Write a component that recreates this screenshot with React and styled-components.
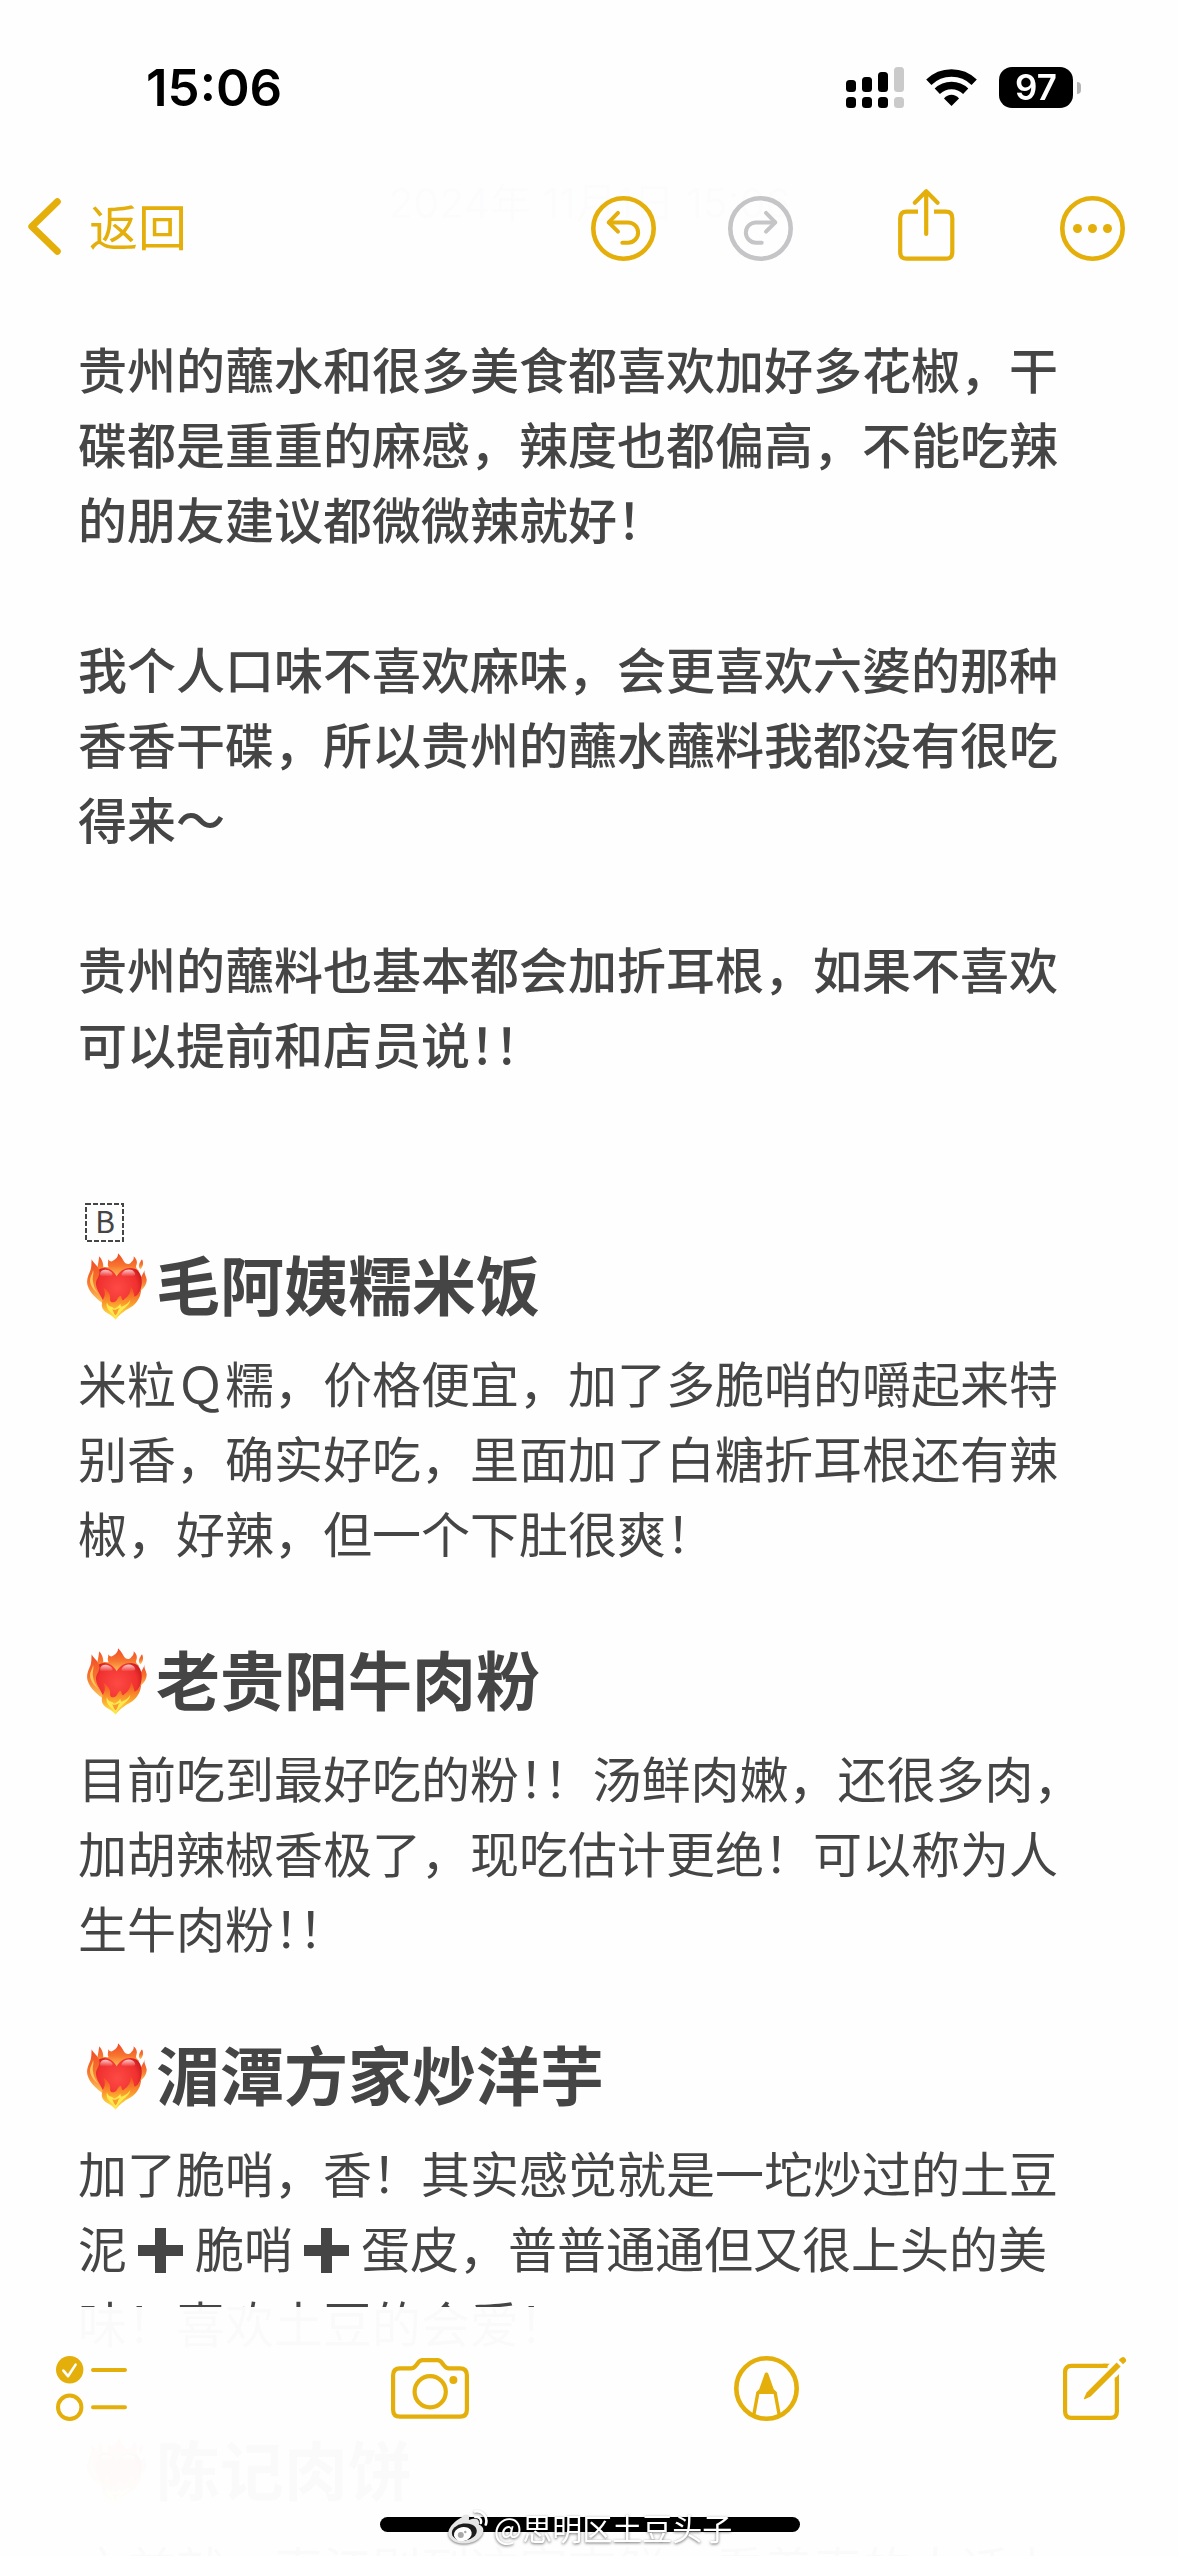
import React, { useId } from "react";
import styled, { createGlobalStyle } from "styled-components";

const GlobalStyle = createGlobalStyle`
  * {
    box-sizing: border-box;
  }
  body {
    margin: 0;
    background: #fefefe;
  }
`;

const accent = "#e4af0a";
const disabled = "#c5c5c7";
const cjk = `"Noto Sans CJK SC", "Noto Sans", sans-serif`;

const Screen = styled.div`
  height: 100vh;
  overflow: hidden;
  background: #fefefe;
  color: #454545;
  font-family: ${cjk};
  font-size: 49px;
  line-height: 75px;
`;

/* Both bars float over the scrolled note and let a trace of it through */
const Header = styled.header`
  position: fixed;
  top: 0;
  left: 0;
  right: 0;
  padding: 67px 0 15px;
  background: rgba(254, 254, 254, 0.98);
`;

const Footer = styled.footer`
  position: fixed;
  bottom: 0;
  left: 0;
  right: 0;
  display: flex;
  flex-direction: column;
  gap: 95px;
  padding: 48px 0 24px;
  background: rgba(254, 254, 254, 0.98);
`;

const StatusBar = styled.div`
  display: flex;
  align-items: center;
  justify-content: space-between;
  height: 41px;
  padding: 0 98px 0 146px;
  color: #000;
  font-family: Inter, sans-serif;
`;

const Time = styled.span`
  font-size: 51px;
  font-weight: 600;
`;

const StatusIcons = styled.div`
  display: flex;
  align-items: center;
  gap: 22px;
`;

const Battery = styled.div`
  display: flex;
  align-items: center;
  gap: 4px;
  &:after {
    content: "";
    width: 4px;
    height: 12px;
    border-radius: 0 4px 4px 0;
    background: #b4b4b4;
  }
`;

const BatteryLevel = styled.span`
  width: 74px;
  height: 41px;
  border-radius: 13px;
  background: #000;
  color: #fff;
  font-size: 35px;
  font-weight: 600;
  line-height: 41px;
  text-align: center;
`;

const Nav = styled.nav`
  display: flex;
  align-items: center;
  justify-content: space-between;
  height: 72px;
  margin-top: 81px;
  padding: 0 54px 0 28px;
`;

const IconButton = styled.button`
  display: flex;
  padding: 0;
  border: 0;
  background: none;
  color: ${accent};
  font: inherit;
  cursor: pointer;
  svg {
    display: block;
    overflow: visible;
  }
  &:disabled {
    color: ${disabled};
    cursor: default;
  }
`;

const BackButton = styled(IconButton)`
  align-items: center;
  gap: 28px;
  font-size: 49px;
  line-height: 72px;
`;

const Actions = styled.div`
  display: flex;
  align-items: flex-end;
  gap: ${(props) => props.$gap}px;
`;

const Toolbar = styled.div`
  display: flex;
  align-items: center;
  justify-content: space-between;
  height: 67px;
  padding: 0 53px 0 56px;
`;

const HomeArea = styled.div`
  position: relative;
  display: flex;
  justify-content: center;
`;

const HomeIndicator = styled.div`
  width: 420px;
  height: 15px;
  border-radius: 8px;
  background: #000;
`;

const Watermark = styled.div`
  position: absolute;
  top: 50%;
  left: 50%;
  display: flex;
  align-items: center;
  gap: 5px;
  padding-top: 4px;
  transform: translate(-50%, -50%);
  color: #fff;
  font-size: 30px;
  line-height: 36px;
  white-space: nowrap;
  text-shadow: 0 1px 3px rgba(0, 0, 0, 0.6);
  svg {
    filter: drop-shadow(0 1px 1px rgba(0, 0, 0, 0.5));
  }
`;

const Note = styled.main`
  padding: 166px 78px 0;
`;

const NoteDate = styled.time`
  display: block;
  margin-bottom: 89px;
  color: #a0a0a4;
  font-family: Inter, ${cjk};
  font-size: 41px;
  text-align: center;
`;

const Paragraph = styled.p`
  margin: 0;
`;

const Intro = styled.section`
  display: flex;
  flex-direction: column;
  gap: 75px;
  margin-bottom: 123px;
  font-weight: 500;
`;

const BlockBadge = styled.svg`
  display: block;
  overflow: visible;
  margin: 0 0 3px 7px;
`;

const Shop = styled.section`
  margin-bottom: 71px;
`;

const ShopTitle = styled.h2`
  display: flex;
  align-items: flex-end;
  gap: 9px;
  margin: 0 0 24px;
  padding-left: 8px;
  font-size: 64px;
  font-weight: 600;
  line-height: 75px;
`;

/* The first of two marks in a row takes half an em */
const HalfMark = styled.span`
  font-feature-settings: "halt";
`;

const PlusMark = styled.svg`
  width: 68px;
  height: 45px;
  vertical-align: -5px;
`;

function DoubleBang() {
  return (
    <>
      <HalfMark>！</HalfMark>！
    </>
  );
}

function Plus() {
  return (
    <PlusMark viewBox="0 0 68 45" role="img" aria-label="加">
      <path d="M28 0h11v17h17v11H39v17H28V28H11V17h17z" fill="currentColor" />
    </PlusMark>
  );
}

function FireHeart() {
  const id = useId();
  const flame = `${id}flame`;
  const heart = `${id}heart`;
  const low = `${id}low`;
  const gloss = `${id}gloss`;
  return (
    <svg width="61" height="67" viewBox="78 187 183 201" role="img" aria-label="燃烧的心">
      <defs>
        <linearGradient id={flame} x1="0" y1="0" x2="0" y2="1">
          <stop offset="0" stopColor="#f24a26" />
          <stop offset="0.5" stopColor="#f7742f" />
          <stop offset="1" stopColor="#fdc95a" />
        </linearGradient>
        <linearGradient id={low} x1="0" y1="0" x2="0" y2="1">
          <stop offset="0" stopColor="#f24a26" />
          <stop offset="0.5" stopColor="#fa9a2c" />
          <stop offset="1" stopColor="#fff04a" />
        </linearGradient>
        <radialGradient id={heart} cx="0.5" cy="0.4" r="0.62">
          <stop offset="0" stopColor="#fd4a45" />
          <stop offset="0.65" stopColor="#f0312f" />
          <stop offset="1" stopColor="#b80e17" />
        </radialGradient>
        <linearGradient id={gloss} x1="0" y1="0" x2="0" y2="1">
          <stop offset="0" stopColor="#fff" stopOpacity="0.75" />
          <stop offset="1" stopColor="#fff" stopOpacity="0" />
        </linearGradient>
      </defs>
      <path
        fill={`url(#${flame})`}
        d="M112 232C114 220 116 210 118 197C126 207 130 216 130 230C138 228 141 230 146 230C140 220 147 214 144 206C151 214 156 214 161 209C169 204 175 198 174 188C184 197 187 205 191 211C196 221 208 224 214 214C220 209 222 204 221 197C230 205 233 214 229 224C226 232 232 236 237 240L226 262H116z"
      />
      <path fill={`url(#${flame})`} d="M246 206C251 216 250 228 241 236C233 229 237 218 246 206z" />
      <path
        fill={`url(#${flame})`}
        d="M253 236C253 246 246 252 243 260L236 306C247 297 261 283 260 266C258 255 252 249 253 236z"
      />
      <path
        fill={`url(#${heart})`}
        d="M170 257C160 238 140 227 121 234C99 243 92 273 106 304C121 335 150 362 167 384C188 362 226 334 240 302C251 273 245 242 224 234C202 227 180 238 170 257z"
      />
      <path
        fill={`url(#${gloss})`}
        d="M120 250C122 234 146 233 157 248C161 256 148 258 140 257C128 257 119 261 120 250zM185 249C194 233 219 233 225 248C228 258 216 256 207 256C196 257 182 259 185 249z"
      />
      <path
        fill={`url(#${flame})`}
        d="M95 206C100 219 114 224 118 240C121 256 109 263 108 278C107 292 117 306 124 320C129 329 132 337 134 341C112 327 91 309 83 285C76 263 92 244 93 232C95 222 94 214 95 206z"
      />
      <path
        fill="#ffc95c"
        d="M99 238C103 248 96 259 99 272C100 285 106 296 114 309C97 295 87 278 91 262C93 253 99 247 99 238z"
      />
      <path
        fill={`url(#${low})`}
        d="M130 291C144 299 153 313 150 327C151 335 160 338 169 330C176 318 181 310 184 319C186 331 190 331 193 325C206 316 213 304 212 288C221 298 221 310 224 318C234 313 241 303 243 294C244 316 232 335 217 347C202 356 180 368 167 387C153 367 121 366 126 337C127 325 142 314 130 291z"
      />
      <path
        fill="#ffe94f"
        d="M141 334C143 350 156 345 162 354C170 351 176 346 181 339C182 347 184 350 188 347C199 342 207 336 211 327C210 347 183 355 167 381C155 364 134 356 141 334z"
      />
      <path fill="#f99b2d" d="M156 355C161 361 160 369 167 374C175 366 172 358 180 352C170 355 163 361 156 355z" />
    </svg>
  );
}

function Badge() {
  return (
    <BlockBadge width="39" height="39" viewBox="0 0 39 39">
      <rect x="1" y="1" width="37" height="37" fill="none" stroke="#454545" strokeWidth="2" strokeDasharray="5 2" />
      <text x="20" y="30" fill="#454545" fontSize="30" fontFamily="Noto Sans CJK SC, sans-serif" textAnchor="middle">
        B
      </text>
    </BlockBadge>
  );
}

function Signal() {
  const bars = [13, 10, 5, 0];
  return (
    <svg width="58" height="41" viewBox="0 0 58 41" role="img" aria-label="信号">
      {bars.map((top, i) => (
        <g key={top} fill={i === 3 ? "#cacaca" : "#000"}>
          <rect x={i * 16} y={top} width="10" height={25 - top} rx="3.5" />
          <rect x={i * 16} y="30" width="10" height="11" rx="3.5" />
        </g>
      ))}
    </svg>
  );
}

function Wifi() {
  return (
    <svg width="51" height="37" viewBox="0 0 51 37" role="img" aria-label="无线网络">
      <g fill="none" stroke="#000" strokeWidth="7.5">
        <path d="M2.8 13.2A32.5 32.5 0 0 1 48.2 13.2" />
        <path d="M11.3 22.3A20.5 20.5 0 0 1 39.7 22.3" />
      </g>
      <path d="M25.5 37L18 29.5C22 24.5 29 24.5 33 29.5z" />
    </svg>
  );
}

function ChevronIcon() {
  return (
    <svg width="33" height="57" viewBox="0 0 33 57" fill="none" stroke="currentColor" strokeWidth="7" strokeLinecap="round" strokeLinejoin="round">
      <path d="M29.3 4.8L3.8 29.5L29.3 54.2" />
    </svg>
  );
}

function TurnIcon({ mirrored }) {
  return (
    <svg width="65" height="65" viewBox="0 0 65 65" fill="none" stroke="currentColor" strokeLinecap="round" strokeLinejoin="round">
      <circle cx="32.5" cy="32.5" r="30.2" strokeWidth="4.6" />
      <g strokeWidth="4" transform={mirrored ? "translate(65 0) scale(-1 1)" : undefined}>
        <path d="M27 16.9L17.7 26.4L27 35.7" />
        <path d="M18 26.4H37A10.1 10.1 0 0 1 37 46.7H31.3" />
      </g>
    </svg>
  );
}

function ShareIcon() {
  return (
    <svg width="65" height="72" viewBox="0 0 65 72" fill="none" stroke="currentColor" strokeWidth="4.2">
      <path d="M24 22.6H12.5Q6.2 22.6 6.2 29V63.3Q6.2 69.7 12.5 69.7H52Q58.3 69.7 58.3 63.3V29Q58.3 22.6 52 22.6H40" />
      <path d="M32.2 45V2.5M20.8 13.7L32.2 2.3L43.6 13.7" strokeLinecap="round" strokeLinejoin="round" />
    </svg>
  );
}

function MoreIcon() {
  return (
    <svg width="65" height="65" viewBox="0 0 65 65" fill="currentColor">
      <circle cx="32.5" cy="32.5" r="30.2" fill="none" stroke="currentColor" strokeWidth="4.6" />
      <circle cx="17.5" cy="32.5" r="4.5" />
      <circle cx="32.5" cy="32.5" r="4.5" />
      <circle cx="47.5" cy="32.5" r="4.5" />
    </svg>
  );
}

function ChecklistIcon() {
  return (
    <svg width="71" height="65" viewBox="0 0 71 65" fill="none" stroke="currentColor" strokeWidth="4" strokeLinecap="round">
      <circle cx="13.7" cy="13.7" r="13.7" fill="currentColor" stroke="none" />
      <path d="M7.4 14.6L12 20.2L19.6 8.6" stroke="#fefefe" strokeWidth="2.6" strokeLinejoin="round" />
      <circle cx="13.7" cy="51.3" r="11.7" />
      <path d="M37 14H69M37 51.3H69" />
    </svg>
  );
}

function CameraIcon() {
  return (
    <svg width="78" height="61" viewBox="0 0 78 61" fill="none" stroke="currentColor" strokeWidth="4.2">
      <path d="M9 10.4H20C22.5 10.4 23.6 9.4 25 7.4L27 4.9C28.3 3 29.6 2.1 31.6 2.1H46.4C48.4 2.1 49.7 3 51 4.9L53 7.4C54.4 9.4 55.5 10.4 58 10.4H69C73.5 10.4 75.9 12.7 75.9 17.2V51.8C75.9 56.3 73.5 58.7 69 58.7H9C4.5 58.7 2.1 56.3 2.1 51.8V17.2C2.1 12.7 4.5 10.4 9 10.4z" />
      <circle cx="39.2" cy="33.7" r="15.6" />
      <circle cx="62.4" cy="22" r="4" fill="currentColor" stroke="none" />
    </svg>
  );
}

function MarkupIcon() {
  return (
    <svg width="65" height="65" viewBox="0 0 65 65" fill="none" stroke="currentColor">
      <circle cx="32.5" cy="32.5" r="30.2" strokeWidth="4.6" />
      <path d="M30.7 17.8C31.3 16 33.7 16 34.3 17.8L39.8 33.2L42.2 35.6V38H22.8V35.6L25.2 33.2z" fill="currentColor" stroke="none" />
      <path d="M24 36L19.8 59M41 36L45.2 59" strokeWidth="3.4" />
    </svg>
  );
}

function ComposeIcon() {
  return (
    <svg width="63" height="63" viewBox="0 0 63 63" fill="none" stroke="currentColor" strokeWidth="4.2">
      <path d="M44.5 8.8H8.5Q2.1 8.8 2.1 15.2V54.4Q2.1 60.8 8.5 60.8H47.5Q53.9 60.8 53.9 54.4V20.5" />
      <path d="M46.8 6.7L42.6 10.9H40V6.7zM56 17L51.8 21.4V24H56z" fill="currentColor" stroke="none" />
      <path d="M53.6 5.4L57.6 9.4L27.6 39.6L21.8 42.2Q20.6 42.4 21 41.2L23.6 35.6z" fill="currentColor" stroke="none" />
      <path d="M57.2 1.6Q59.9-1.2 62.2 1.2T61.6 5.8L60 7.2L55.8 3z" fill="currentColor" stroke="none" />
    </svg>
  );
}

function WeiboLogo() {
  return (
    <svg width="42" height="36" viewBox="0 0 42 36">
      <path
        fill="#e6e6e6"
        d="M15 8C19 4.5 23 6 21.5 11C27 9 33 9 31.5 15.5C36 17 37.5 21 34.5 26C30 33 20 36 11 34C3 32 -1 26 2 20C4.5 15 10 10.5 15 8z"
      />
      <ellipse cx="17" cy="23" rx="12.5" ry="8.5" fill="#1c1c1c" transform="rotate(-8 17 23)" />
      <ellipse cx="15.500" cy="25" rx="9" ry="7" fill="#fff" transform="rotate(-12 15.5 25)" />
      <circle cx="13.5" cy="26" r="3" fill="#a8a8a8" />
      <circle cx="18" cy="23" r="1.2" fill="#a8a8a8" />
      <path d="M27.5 2.5C35 1 41 8 38.5 15.5M28 8C32 7.5 34.5 10.5 33.5 14" fill="none" stroke="#fff" strokeWidth="2.6" strokeLinecap="round" />
    </svg>
  );
}

const shops = [
  {
    name: "毛阿姨糯米饭",
    text: "米粒Ｑ糯，价格便宜，加了多脆哨的嚼起来特别香，确实好吃，里面加了白糖折耳根还有辣椒，好辣，但一个下肚很爽！",
  },
  {
    name: "老贵阳牛肉粉",
    text: (
      <>
        目前吃到最好吃的粉
        <DoubleBang />
        汤鲜肉嫩，还很多肉，加胡辣椒香极了，现吃估计更绝！可以称为人生牛肉粉
        <DoubleBang />
      </>
    ),
  },
  {
    name: "湄潭方家炒洋芋",
    text: (
      <>
        加了脆哨，香！其实感觉就是一坨炒过的土豆泥
        <Plus />
        脆哨
        <Plus />
        蛋皮，普普通通但又很上头的美味！喜欢土豆的会爱！
      </>
    ),
  },
  {
    name: "陈记肉饼",
    text: "之前就，直江别到这家吉鲜，看着真的人话上",
  },
];

function App() {
  return (
    <Screen>
      <GlobalStyle />
      <Note>
        <NoteDate dateTime="2024-11-01T15:06">2024年 11月1日 15:06</NoteDate>
        <Intro>
          <Paragraph>
            贵州的蘸水和很多美食都喜欢加好多花椒，干碟都是重重的麻感，辣度也都偏高，不能吃辣的朋友建议都微微辣就好！
          </Paragraph>
          <Paragraph>
            我个人口味不喜欢麻味，会更喜欢六婆的那种香香干碟，所以贵州的蘸水蘸料我都没有很吃得来～
          </Paragraph>
          <Paragraph>
            贵州的蘸料也基本都会加折耳根，如果不喜欢可以提前和店员说
            <DoubleBang />
          </Paragraph>
        </Intro>
        <Badge />
        {shops.map((shop) => (
          <Shop key={shop.name}>
            <ShopTitle>
              <FireHeart />
              {shop.name}
            </ShopTitle>
            <Paragraph>{shop.text}</Paragraph>
          </Shop>
        ))}
      </Note>
      <Header>
        <StatusBar>
          <Time>15:06</Time>
          <StatusIcons>
            <Signal />
            <Wifi />
            <Battery>
              <BatteryLevel>97</BatteryLevel>
            </Battery>
          </StatusIcons>
        </StatusBar>
        <Nav>
          <BackButton type="button">
            <ChevronIcon />
            返回
          </BackButton>
          <Actions $gap={101}>
            <Actions $gap={72}>
              <IconButton type="button" aria-label="撤销">
                <TurnIcon />
              </IconButton>
              <IconButton type="button" aria-label="重做" disabled>
                <TurnIcon mirrored />
              </IconButton>
            </Actions>
            <IconButton type="button" aria-label="共享">
              <ShareIcon />
            </IconButton>
            <IconButton type="button" aria-label="更多">
              <MoreIcon />
            </IconButton>
          </Actions>
        </Nav>
      </Header>
      <Footer>
        <Toolbar>
          <IconButton type="button" aria-label="核对清单">
            <ChecklistIcon />
          </IconButton>
          <IconButton type="button" aria-label="相机">
            <CameraIcon />
          </IconButton>
          <IconButton type="button" aria-label="标记">
            <MarkupIcon />
          </IconButton>
          <IconButton type="button" aria-label="新建备忘录">
            <ComposeIcon />
          </IconButton>
        </Toolbar>
        <HomeArea>
          <HomeIndicator />
          <Watermark>
            <WeiboLogo />
            @思明区土豆头子
          </Watermark>
        </HomeArea>
      </Footer>
    </Screen>
  );
}

export default App;
